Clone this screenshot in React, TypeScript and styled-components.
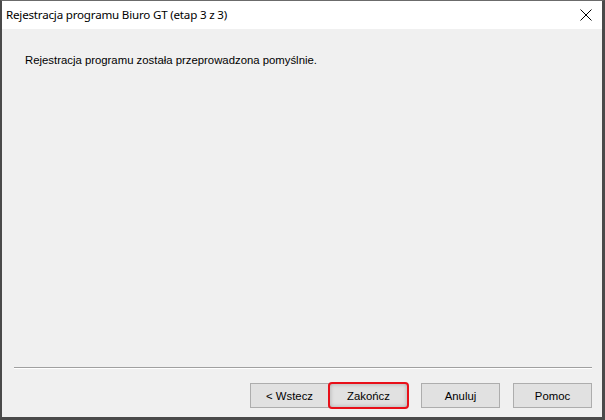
import React from "react";
import styled, { createGlobalStyle } from "styled-components";

const Global = createGlobalStyle`
  html, body {
    margin: 0;
    padding: 0;
    background: #ffffff;
  }
  * {
    box-sizing: border-box;
  }
`;

const buttons = [
  { label: "< Wstecz", gapBefore: 0 },
  { label: "Zakończ", gapBefore: 0, marked: true },
  { label: "Anuluj", gapBefore: 13 },
  { label: "Pomoc", gapBefore: 13 },
];

const App = () => {
  return (
    <>
      <Global />
      <Window>
        <TitleBar>
          <Title>Rejestracja programu Biuro GT (etap 3 z 3)</Title>
          <CloseBtn>
            <svg width="12" height="12" viewBox="0 0 12 12">
              <path d="M0.5 0.5 L11.5 11.5 M11.5 0.5 L0.5 11.5" stroke="#000" strokeWidth="1" />
            </svg>
          </CloseBtn>
        </TitleBar>
        <Body>
          <Message>Rejestracja programu została przeprowadzona pomyślnie.</Message>
          <Separator />
          <ButtonRow>
            {buttons.map((b) => (
              <ButtonSlot key={b.label} gap={b.gapBefore}>
                <Button>{b.label}</Button>
                {b.marked ? <RedMark /> : null}
              </ButtonSlot>
            ))}
          </ButtonRow>
        </Body>
      </Window>
    </>
  );
};

export default App;

const Window = styled.div`
  width: 605px;
  height: 420px;
  display: flex;
  flex-direction: column;
  border-top: 1px solid #6b6b6b;
  border-left: 2px solid #4a4a4a;
  border-right: 3px solid #4a4a4a;
  border-bottom: 3px solid #4a4a4a;
  background: #f0f0f0;
`;

const TitleBar = styled.div`
  height: 28px;
  background: #ffffff;
  display: flex;
  align-items: center;
  justify-content: space-between;
  padding-left: 4px;
  padding-right: 10px;
`;

const Title = styled.div`
  font-family: "Noto Sans", "Open Sans", sans-serif;
  font-size: 11.6px;
  letter-spacing: -0.2px;
  color: #000000;
  margin-top: -1px;
`;

const CloseBtn = styled.div`
  width: 12px;
  height: 12px;
  display: flex;
  margin-top: -1px;
`;

const Body = styled.div`
  flex: 1;
  display: flex;
  flex-direction: column;
  padding: 0 10px 0 12px;
`;

const Message = styled.div`
  font-family: "Liberation Sans", Arial, sans-serif;
  font-size: 11.35px;
  color: #000000;
  padding-left: 11px;
  margin-top: 25px;
  flex: 1;
`;

const Separator = styled.div`
  height: 2px;
  border-top: 1px solid #a0a0a0;
  border-bottom: 1px solid #ffffff;
  margin: 0 0 14px 0;
`;

const ButtonRow = styled.div`
  display: flex;
  justify-content: flex-end;
  margin-bottom: 9px;
`;

const ButtonSlot = styled.div<{ gap: number }>`
  position: relative;
  margin-left: ${(p) => p.gap}px;
`;

const Button = styled.div`
  width: 79px;
  height: 25px;
  display: flex;
  align-items: center;
  justify-content: center;
  background: #e1e1e1;
  border: 1px solid #adadad;
  font-family: "Liberation Sans", Arial, sans-serif;
  font-size: 11.35px;
  color: #000000;
`;

const RedMark = styled.div`
  position: absolute;
  left: -1px;
  top: -1px;
  right: -1px;
  bottom: -1px;
  border: 2px solid #e8101a;
  border-radius: 4px;
  box-shadow: inset 0 0 4px rgba(0, 0, 0, 0.25);
`;
